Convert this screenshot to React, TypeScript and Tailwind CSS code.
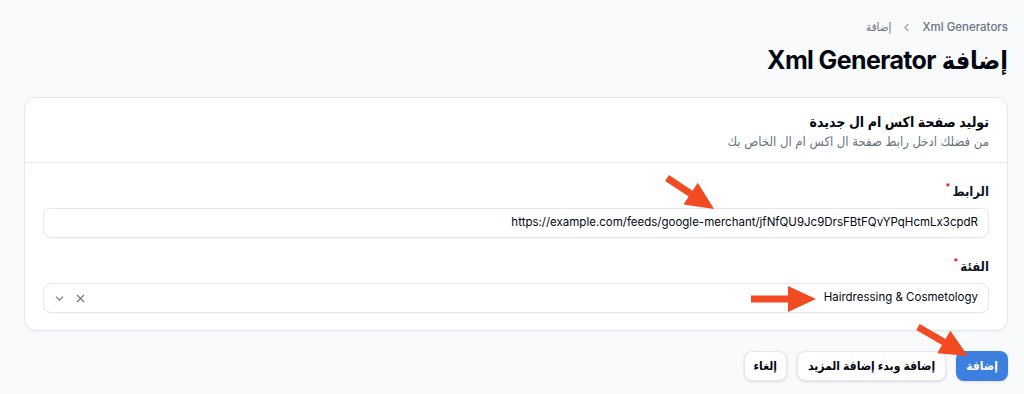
import { ChevronLeft, ChevronDown, X } from "lucide-react";

const Arrow = ({ x1, y1, x2, y2 }: { x1: number; y1: number; x2: number; y2: number }) => {
  const dx = x2 - x1;
  const dy = y2 - y1;
  const len = Math.sqrt(dx * dx + dy * dy);
  const ux = dx / len;
  const uy = dy / len;
  const head = 28;
  const hw = 13;
  const sw = 3.5;
  const bx = x2 - ux * head;
  const by = y2 - uy * head;
  const nx = -uy;
  const ny = ux;
  const pts = [
    [x1 + nx * sw, y1 + ny * sw],
    [bx + nx * sw, by + ny * sw],
    [bx + nx * hw, by + ny * hw],
    [x2, y2],
    [bx - nx * hw, by - ny * hw],
    [bx - nx * sw, by - ny * sw],
    [x1 - nx * sw, y1 - ny * sw],
  ]
    .map((p) => p.join(","))
    .join(" ");
  return <polygon points={pts} fill="#f24a22" />;
};

const Label = ({ text }: { text: string }) => (
  <div className="flex items-start gap-[2px] text-[13px] font-semibold leading-5 text-gray-900">
    <span>{text}</span>
    <span className="text-[9px] leading-3 text-red-600">*</span>
  </div>
);

export default function App() {
  return (
    <div
      dir="rtl"
      className="relative min-h-[394px] overflow-hidden bg-[#f9fafb] pl-6 pr-4 pt-[17px] font-['Inter','DejaVu_Sans_Condensed','DejaVu_Sans',sans-serif] text-gray-900"
    >
      <nav className="flex items-center gap-[9px] text-[11.5px] font-medium leading-5 text-gray-500">
        <span>Xml Generators</span>
        <ChevronLeft size={13} strokeWidth={2} className="text-gray-400" />
        <span>إضافة</span>
      </nav>

      <h1 className="mt-[7px] text-[25px] font-bold leading-8 tracking-tight text-gray-950">
        إضافة Xml Generator
      </h1>

      <section className="mt-[21px] rounded-xl border border-gray-200 bg-white shadow-[0_1px_2px_rgba(0,0,0,0.04)]">
        <header className="border-b border-gray-200 px-[18px] pb-[12px] pt-[14px]">
          <h2 className="text-[14px] font-semibold leading-5 text-gray-950">
            توليد صفحة اكس ام ال جديدة
          </h2>
          <p className="text-[13px] leading-[18px] text-gray-500">
            من فضلك ادخل رابط صفحة ال اكس ام ال الخاص بك
          </p>
        </header>

        <div className="flex flex-col px-[18px] pb-[17px] pt-[18px]">
          <Label text="الرابط" />
          <div className="mt-[7px] flex h-[30px] items-center rounded-lg border border-gray-200 bg-white pl-3 pr-[10px] text-[11.5px] text-gray-950 shadow-[0_1px_1px_rgba(0,0,0,0.03)]">
            <span dir="ltr">https://example.com/feeds/google-merchant/jfNfQU9Jc9DrsFBtFQvYPqHcmLx3cpdR</span>
          </div>

          <div className="mt-[18px]">
            <Label text="الفئة" />
          </div>
          <div className="mt-[7px] flex h-[30px] items-center rounded-lg border border-gray-200 bg-white pl-[9px] pr-[10px] text-[11.5px] text-gray-950 shadow-[0_1px_1px_rgba(0,0,0,0.03)]">
            <span dir="ltr">Hairdressing &amp; Cosmetology</span>
            <div className="flex-1" />
            <X size={13} strokeWidth={2} className="text-gray-500" />
            <ChevronDown size={13} strokeWidth={2} className="mr-[8px] text-gray-500" />
          </div>
        </div>
      </section>

      <div className="mt-5 flex gap-[10px]">
        <button className="h-[30px] rounded-lg bg-[#3c7fde] px-[10px] text-[12px] font-semibold text-white shadow-sm">
          إضافة
        </button>
        <button className="h-[30px] rounded-lg border border-gray-200 bg-white px-[10px] text-[12px] font-semibold text-gray-950 shadow-sm">
          إضافة وبدء إضافة المزيد
        </button>
        <button className="h-[30px] rounded-lg border border-gray-200 bg-white px-[9px] text-[12px] font-semibold text-gray-950 shadow-sm">
          إلغاء
        </button>
      </div>

      <svg className="pointer-events-none absolute left-0 top-0" width={1024} height={394}>
        <Arrow x1={667} y1={178} x2={714} y2={209} />
        <Arrow x1={751} y1={299} x2={816} y2={299} />
        <Arrow x1={918} y1={327} x2={968} y2={356} />
      </svg>
    </div>
  );
}
